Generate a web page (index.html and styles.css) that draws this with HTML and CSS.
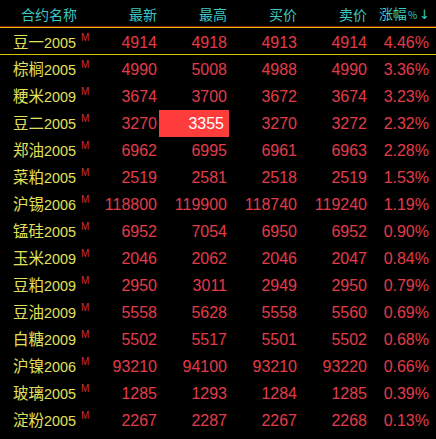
FILE: index.html
```html
<!DOCTYPE html>
<html lang="zh">
<head>
<meta charset="utf-8">
<link rel="stylesheet" href="styles.css">
</head>
<body>
<div class="board">
  <div class="row head">
    <div class="c name-h">合约名称</div>
    <div class="c num">最新</div>
    <div class="c num">最高</div>
    <div class="c num">买价</div>
    <div class="c num">卖价</div>
    <div class="c num pct-h">涨幅<span class="pc">%</span><span class="arr">↓</span></div>
  </div>
  <div class="row sel">
    <div class="c name"><span class="cn">豆一</span>2005<sup>M</sup></div>
    <div class="c num">4914</div><div class="c num">4918</div><div class="c num">4913</div><div class="c num">4914</div><div class="c num pct">4.46%</div>
  </div>
  <div class="row">
    <div class="c name"><span class="cn">棕榈</span>2005<sup>M</sup></div>
    <div class="c num">4990</div><div class="c num">5008</div><div class="c num">4988</div><div class="c num">4990</div><div class="c num pct">3.36%</div>
  </div>
  <div class="row">
    <div class="c name"><span class="cn">粳米</span>2009<sup>M</sup></div>
    <div class="c num">3674</div><div class="c num">3700</div><div class="c num">3672</div><div class="c num">3674</div><div class="c num pct">3.23%</div>
  </div>
  <div class="row">
    <div class="c name"><span class="cn">豆二</span>2005<sup>M</sup></div>
    <div class="c num">3270</div><div class="c num"><span class="hl">3355</span></div><div class="c num">3270</div><div class="c num">3272</div><div class="c num pct">2.32%</div>
  </div>
  <div class="row">
    <div class="c name"><span class="cn">郑油</span>2005<sup>M</sup></div>
    <div class="c num">6962</div><div class="c num">6995</div><div class="c num">6961</div><div class="c num">6963</div><div class="c num pct">2.28%</div>
  </div>
  <div class="row">
    <div class="c name"><span class="cn">菜粕</span>2005<sup>M</sup></div>
    <div class="c num">2519</div><div class="c num">2581</div><div class="c num">2518</div><div class="c num">2519</div><div class="c num pct">1.53%</div>
  </div>
  <div class="row">
    <div class="c name"><span class="cn">沪锡</span>2006<sup>M</sup></div>
    <div class="c num">118800</div><div class="c num">119900</div><div class="c num">118740</div><div class="c num">119240</div><div class="c num pct">1.19%</div>
  </div>
  <div class="row">
    <div class="c name"><span class="cn">锰硅</span>2005<sup>M</sup></div>
    <div class="c num">6952</div><div class="c num">7054</div><div class="c num">6950</div><div class="c num">6952</div><div class="c num pct">0.90%</div>
  </div>
  <div class="row">
    <div class="c name"><span class="cn">玉米</span>2009<sup>M</sup></div>
    <div class="c num">2046</div><div class="c num">2062</div><div class="c num">2046</div><div class="c num">2047</div><div class="c num pct">0.84%</div>
  </div>
  <div class="row">
    <div class="c name"><span class="cn">豆粕</span>2009<sup>M</sup></div>
    <div class="c num">2950</div><div class="c num">3011</div><div class="c num">2949</div><div class="c num">2950</div><div class="c num pct">0.79%</div>
  </div>
  <div class="row">
    <div class="c name"><span class="cn">豆油</span>2009<sup>M</sup></div>
    <div class="c num">5558</div><div class="c num">5628</div><div class="c num">5558</div><div class="c num">5560</div><div class="c num pct">0.69%</div>
  </div>
  <div class="row">
    <div class="c name"><span class="cn">白糖</span>2009<sup>M</sup></div>
    <div class="c num">5502</div><div class="c num">5517</div><div class="c num">5501</div><div class="c num">5502</div><div class="c num pct">0.68%</div>
  </div>
  <div class="row">
    <div class="c name"><span class="cn">沪镍</span>2006<sup>M</sup></div>
    <div class="c num">93210</div><div class="c num">94100</div><div class="c num">93210</div><div class="c num">93220</div><div class="c num pct">0.66%</div>
  </div>
  <div class="row">
    <div class="c name"><span class="cn">玻璃</span>2005<sup>M</sup></div>
    <div class="c num">1285</div><div class="c num">1293</div><div class="c num">1284</div><div class="c num">1285</div><div class="c num pct">0.39%</div>
  </div>
  <div class="row">
    <div class="c name"><span class="cn">淀粉</span>2005<sup>M</sup></div>
    <div class="c num">2267</div><div class="c num">2287</div><div class="c num">2267</div><div class="c num">2268</div><div class="c num pct">0.13%</div>
  </div>
</div>
</body>
</html>
```
FILE: styles.css
```css
html, body {
  margin: 0;
  padding: 0;
  background: #000;
  overflow: hidden;
}
.board {
  width: 436px;
  height: 439px;
  overflow: hidden;
  font-family: "Liberation Sans", "Noto Sans CJK SC", sans-serif;
}
.row {
  display: grid;
  grid-template-columns: 100px 60px 70px 70px 70px 66px;
  height: 27px;
  align-items: center;
  box-sizing: border-box;
}
.head {
  height: 27px;
  border-bottom: 1px solid #8a1c14;
  color: #3ec8c4;
  font-family: "Noto Sans CJK SC", sans-serif;
  font-size: 14px;
}
.sel {
  height: 28px;
  border-top: 1px solid #d8c400;
  border-bottom: 1px solid #d8c400;
}
.c {
  white-space: nowrap;
  line-height: 27px;
}
.name-h {
  padding-left: 21px;
}
.num {
  text-align: right;
  padding-right: 3px;
  color: #e23c4a;
  font-size: 16px;
}
.head .num {
  color: #3ec8c4;
  font-size: 14px;
}
.pct {
  padding-right: 7px;
}
.pct-h {
  padding-right: 6px;
}
.pc {
  font-size: 10px;
  margin-left: 1px;
}
.arr {
  font-family: "DejaVu Sans", sans-serif;
  font-size: 13px;
  margin-left: 2px;
}
.name {
  padding-left: 13px;
  color: #e0e05a;
  font-size: 14.4px;
}
.cn {
  font-family: "Noto Sans CJK SC", sans-serif;
  font-size: 15.5px;
}
.name sup {
  color: #c8303a;
  font-size: 10px;
  margin-left: 5px;
  vertical-align: 7px;
  line-height: 0;
}
.hl {
  display: block;
  margin: 0 -2px 0 -1px;
  padding-right: 5px;
  background: #ff3c3c;
  color: #fff;
  height: 27px;
}
```
